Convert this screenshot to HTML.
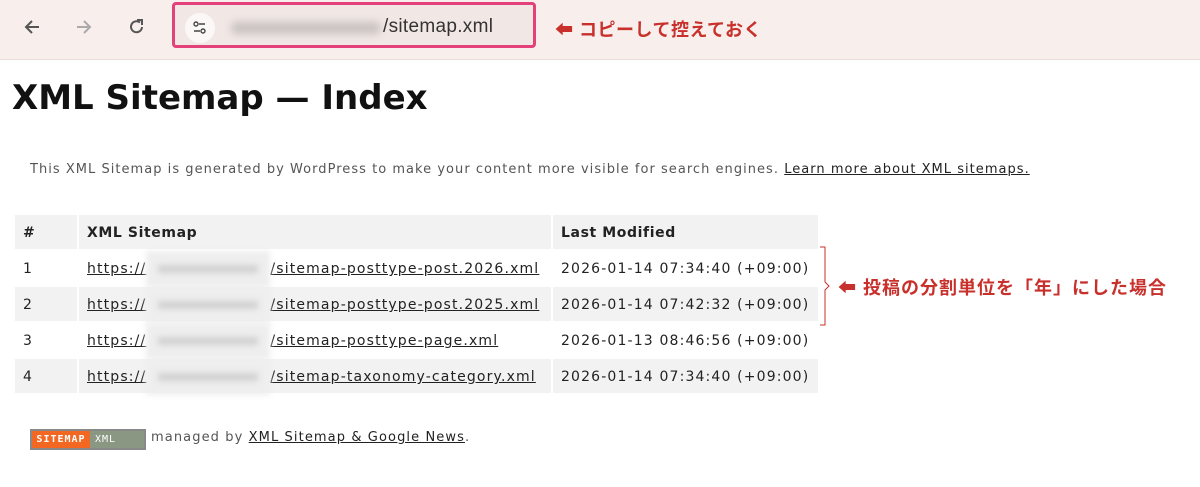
<!DOCTYPE html>
<html><head><meta charset="utf-8"><style>
*{margin:0;padding:0;box-sizing:border-box}
body{width:1200px;height:487px;background:#fff;font-family:"DejaVu Sans","Liberation Sans",sans-serif;position:relative;overflow:hidden;color:#222}
.bar{position:absolute;left:0;top:0;width:1200px;height:60px;background:#f8efec;border-bottom:1px solid #eadcd8}
.addr{position:absolute;left:172px;top:2px;width:364px;height:46px;border:3px solid #e2417a;border-radius:4px;background:#f1e7e5}
.ic{position:absolute;left:10px;top:8px;width:30px;height:30px;border-radius:50%;background:#fbf7f6}
.blur{position:absolute;background:#c9c2c0;filter:blur(4px);border-radius:6px}
.red{color:#c8302c;font-family:"Liberation Sans","Noto Sans CJK JP",sans-serif;font-weight:bold;position:absolute;letter-spacing:0.5px}
h1{position:absolute;left:12px;top:78px;font-size:34px;font-weight:bold;font-family:"DejaVu Sans",sans-serif;color:#111}
.desc{position:absolute;left:30px;top:162px;font-size:13px;color:#555;letter-spacing:1.03px;white-space:nowrap}
.desc a{color:#222;text-decoration:underline}
table{position:absolute;left:13px;top:213px;border-collapse:separate;border-spacing:2px;font-size:14px;letter-spacing:1.15px}
td,th{height:34px;padding:2px 8px 0;text-align:left;white-space:nowrap}
th{background:#f2f2f2;font-weight:bold;letter-spacing:0.6px}
tr.g td{background:#f2f2f2}
td a{color:#222;text-decoration:underline}
.bl{display:inline-block;width:124px;height:14px;position:relative;vertical-align:middle}
.bl::before{content:"";position:absolute;left:0;top:-11px;width:124px;height:36px;background:#eeeeee;filter:blur(3px)}
.bl::after{content:"";position:absolute;left:12px;top:3px;width:100px;height:8px;background:#d2d2d2;filter:blur(3px)}
.foot{position:absolute;left:151px;top:430px;font-size:13px;color:#555;letter-spacing:1.1px}
.foot a{color:#222;text-decoration:underline}
</style></head><body>
<div class="bar">
<svg style="position:absolute;left:22px;top:17px" width="20" height="20" viewBox="0 0 20 20"><path d="M17 10H4M10 4L4 10L10 16" fill="none" stroke="#555" stroke-width="2"/></svg>
<svg style="position:absolute;left:74px;top:17px" width="20" height="20" viewBox="0 0 20 20"><path d="M3 10H16M10 4L16 10L10 16" fill="none" stroke="#aaa" stroke-width="2"/></svg>
<svg style="position:absolute;left:127px;top:17px" width="20" height="20" viewBox="0 0 20 20"><path d="M15 10A5.5 5.5 0 1 1 13 5.5" fill="none" stroke="#555" stroke-width="2"/><path d="M10 3H15V8" fill="none" stroke="#555" stroke-width="2"/></svg>
<div class="addr"><div class="ic"><svg width="30" height="30" viewBox="0 0 30 30"><circle cx="11" cy="11" r="2" fill="none" stroke="#444" stroke-width="1.4"/><path d="M14 11H20M9 18H15" stroke="#444" stroke-width="1.5"/><circle cx="18" cy="18" r="2" fill="none" stroke="#444" stroke-width="1.4"/></svg></div>
<div class="blur" style="left:56px;top:17px;width:150px;height:12px"></div>
<div style="position:absolute;left:208px;top:11px;font-family:'Liberation Sans',sans-serif;font-size:19px;color:#333;letter-spacing:0.3px">/sitemap.xml</div></div>
<div class="red" style="left:555px;top:16px;font-size:18px">⬅ コピーして控えておく</div>
</div>
<h1>XML Sitemap — Index</h1>
<div class="desc">This XML Sitemap is generated by WordPress to make your content more visible for search engines. <a>Learn more about XML sitemaps.</a></div>
<table>
<tr><th style="width:62px">#</th><th style="width:472px">XML Sitemap</th><th style="width:265px">Last Modified</th></tr>
<tr><td>1</td><td><a>https://<span class="bl"></span>/sitemap-posttype-post.2026.xml</a></td><td>2026-01-14 07:34:40 (+09:00)</td></tr>
<tr class="g"><td>2</td><td><a>https://<span class="bl"></span>/sitemap-posttype-post.2025.xml</a></td><td>2026-01-14 07:42:32 (+09:00)</td></tr>
<tr><td>3</td><td><a>https://<span class="bl"></span>/sitemap-posttype-page.xml</a></td><td>2026-01-13 08:46:56 (+09:00)</td></tr>
<tr class="g"><td>4</td><td><a>https://<span class="bl"></span>/sitemap-taxonomy-category.xml</a></td><td>2026-01-14 07:34:40 (+09:00)</td></tr>
</table>
<svg style="position:absolute;left:818px;top:246px" width="16" height="80"><path d="M2 1H7V36L11 40L7 44V79H2" fill="none" stroke="#c8302c" stroke-width="1"/></svg>
<div class="red" style="left:838px;top:274px;font-size:18px;letter-spacing:1px">⬅ 投稿の分割単位を「年」にした場合</div>
<div style="position:absolute;left:30px;top:429px;width:116px;height:21px;border:2px solid #888;display:flex;font-family:'DejaVu Sans Mono',monospace;font-size:10px;color:#fff;line-height:17px;letter-spacing:1px">
<div style="background:#f26722;width:58px;text-align:center;font-weight:bold">SITEMAP</div><div style="background:#8a9883;flex:1;padding-left:5px">XML</div></div>
<div class="foot">managed by <a>XML Sitemap &amp; Google News</a>.</div>
</body></html>
